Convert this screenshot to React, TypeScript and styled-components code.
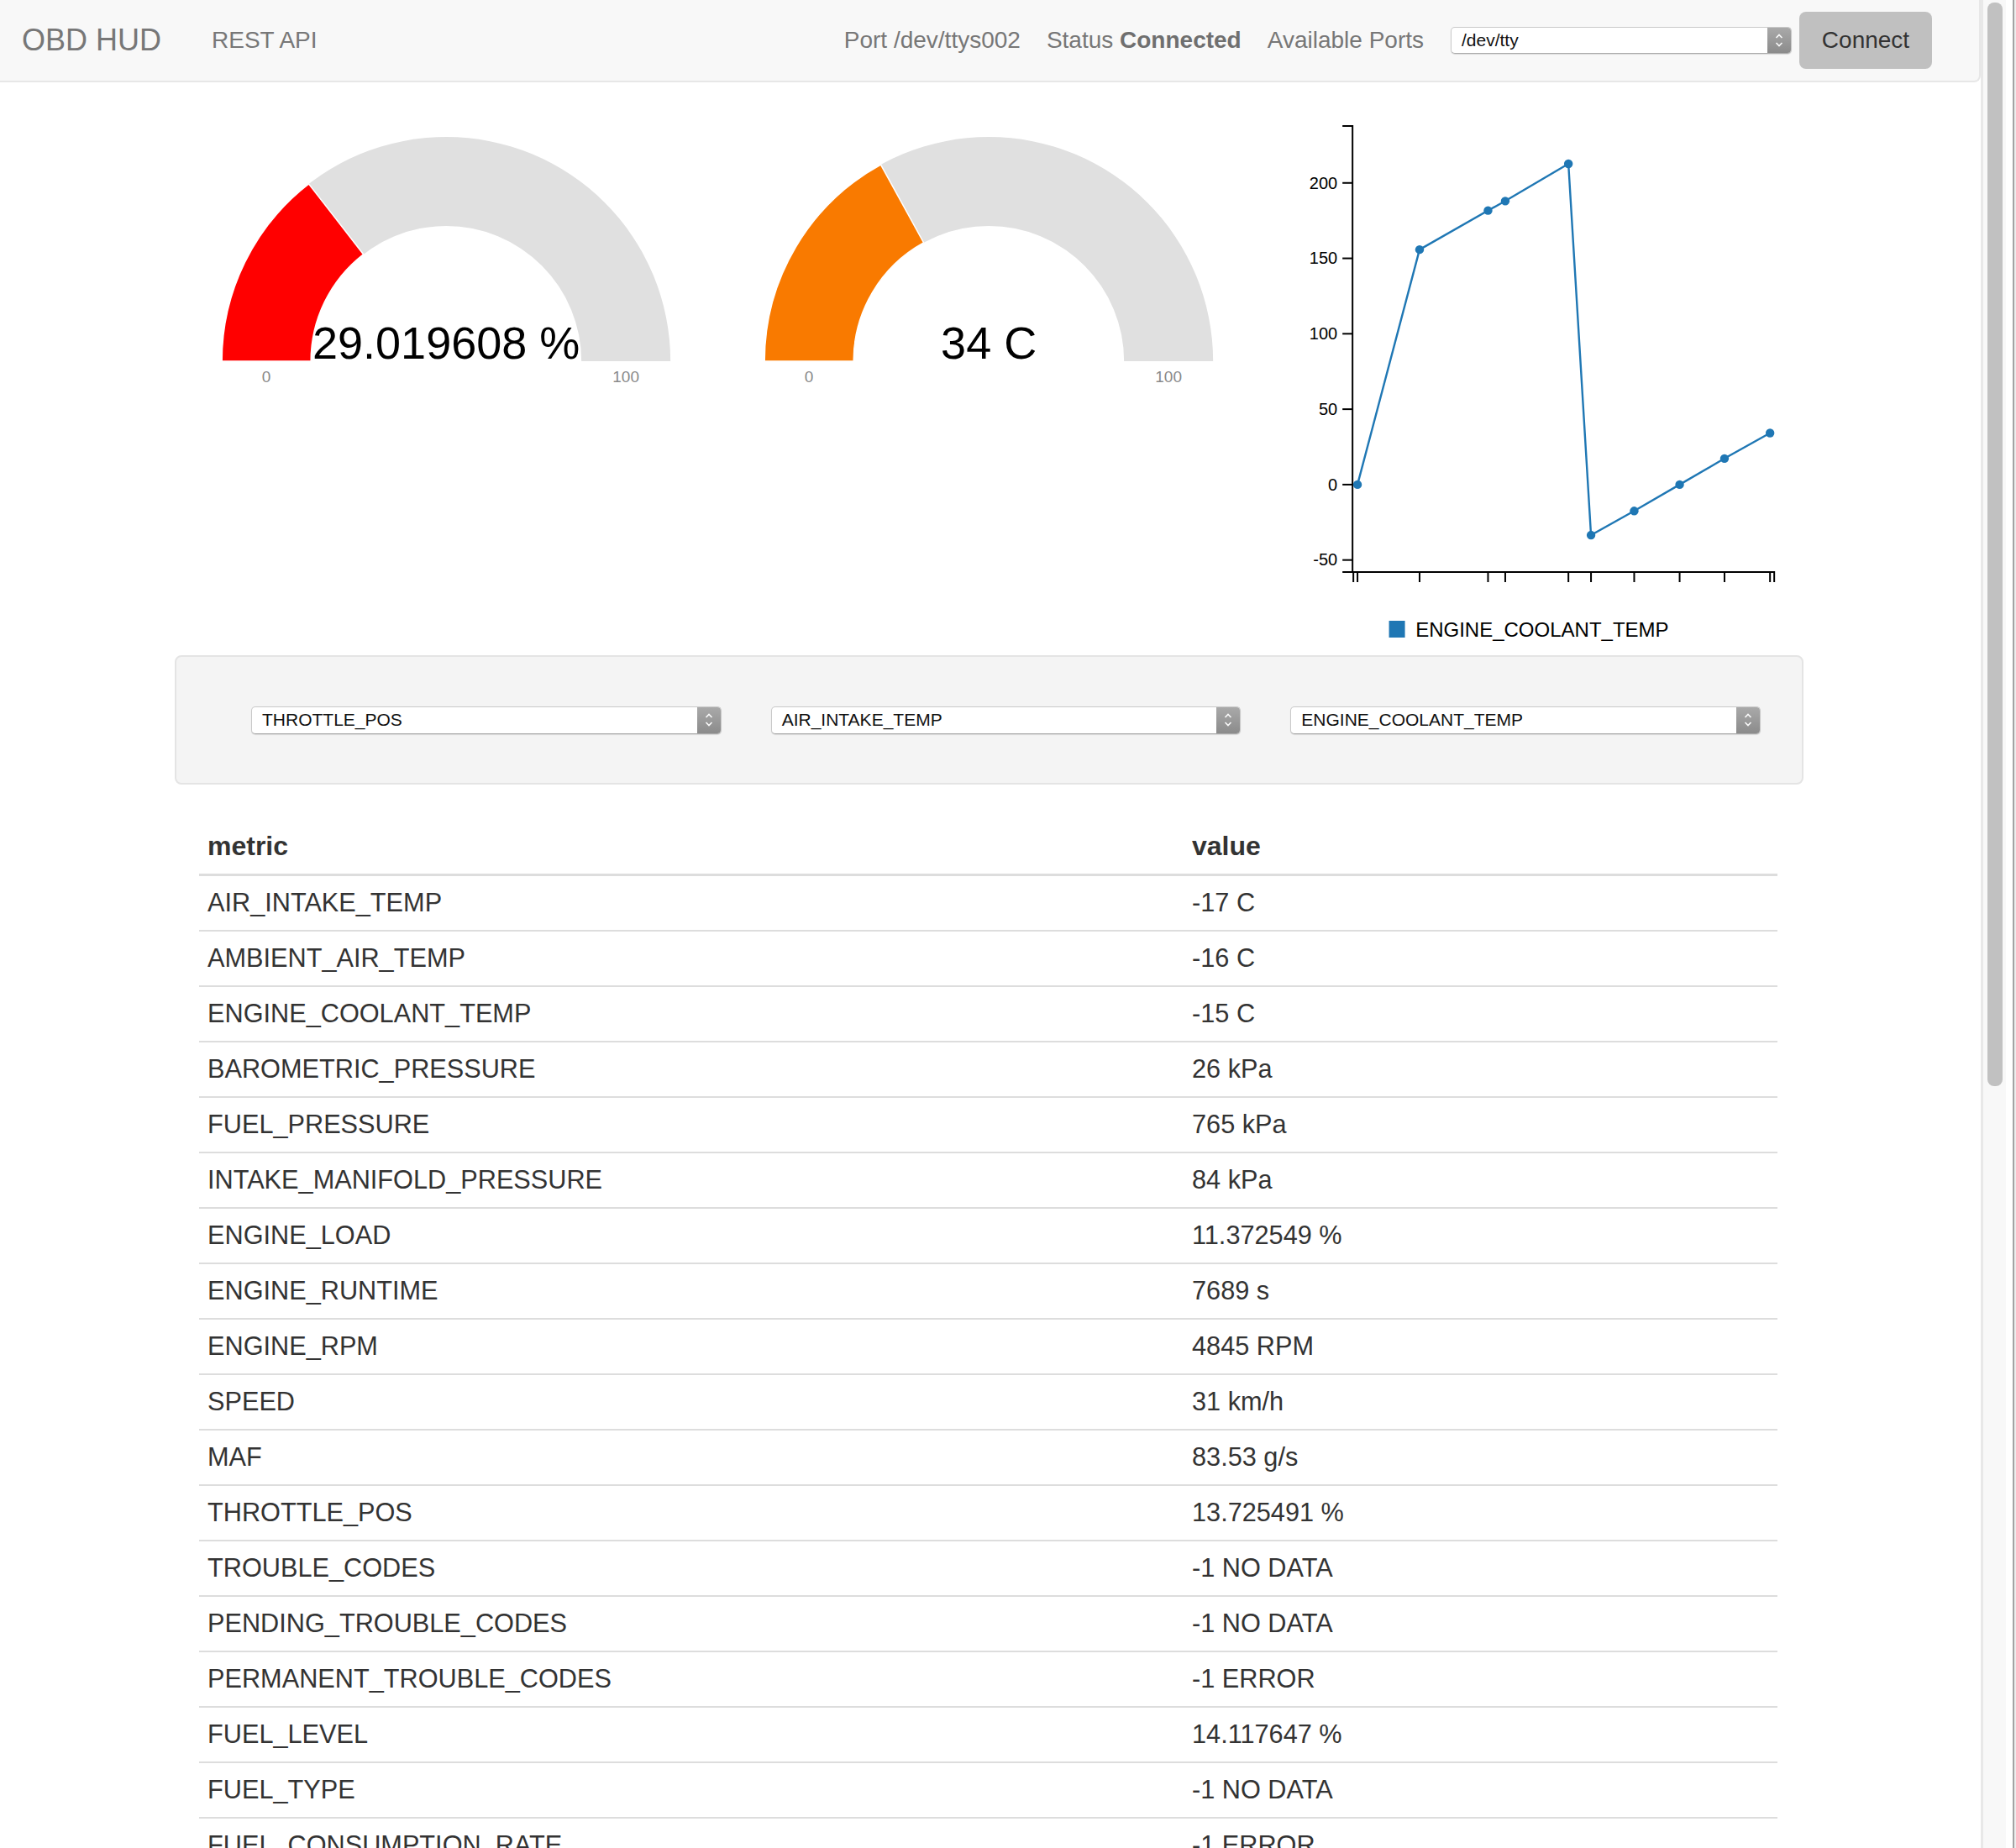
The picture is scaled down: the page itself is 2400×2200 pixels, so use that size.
import React from "react";
import styled, { createGlobalStyle } from "styled-components";

const GlobalStyle = createGlobalStyle`
  html, body { margin: 0; padding: 0; background: #fff; overflow: hidden; }
  body { font-family: "Liberation Sans", Arial, Helvetica, sans-serif; }
  * { box-sizing: border-box; }
`;

const Page = styled.div`
  display: flex;
  width: 2400px;
  height: 2200px;
  overflow: hidden;
  background: #fff;
`;

const Main = styled.div`
  flex: 1;
  min-width: 0;
  overflow: hidden;
`;

const ScrollTrack = styled.div`
  width: 30px;
  flex: none;
  background: #f8f8f8;
  border-left: 3px solid #e8e8e8;
  padding: 3px 4px 0 5px;
`;

const ScrollThumb = styled.div`
  height: 1290px;
  background: #c1c1c1;
  border-radius: 8px;
`;

const WindowEdge = styled.div`
  width: 12px;
  flex: none;
  background: linear-gradient(to right, #ffffff 0 8px, #a3a3a3 8px 10px, #ededed 10px);
`;

const Navbar = styled.nav`
  display: flex;
  align-items: center;
  height: 98px;
  background: #f8f8f8;
  border-bottom: 2px solid #e7e7e7;
  border-right: 2px solid #e7e7e7;
  border-bottom-right-radius: 8px;
  padding: 0 56px 0 26px;
  color: #777;
`;

const Brand = styled.span`
  font-size: 36px;
  color: #777;
  margin-right: 60px;
`;

const NavLink = styled.span`
  font-size: 28px;
  color: #777;
`;

const NavRight = styled.div`
  margin-left: auto;
  display: flex;
  align-items: center;
`;

const NavText = styled.span<{ $gap?: number }>`
  font-size: 28px;
  color: #777;
  margin-right: ${(p) => p.$gap ?? 31}px;
  white-space: nowrap;
  b { font-weight: bold; color: #6f6f6f; }
`;

const SelectBox = styled.div<{ $w?: number; $h?: number }>`
  display: flex;
  align-items: stretch;
  width: ${(p) => (p.$w ? `${p.$w}px` : "100%")};
  height: ${(p) => p.$h ?? 33}px;
  background: #fff;
  border: 1px solid #c9c9c9;
  border-bottom-color: #aaa;
  border-radius: 5px;
  box-shadow: 0 1px 1px rgba(0, 0, 0, 0.12);
  overflow: hidden;
`;

const SelectLabel = styled.span`
  flex: 1;
  display: flex;
  align-items: center;
  padding-left: 12px;
  font-size: 21px;
  color: #111;
  white-space: nowrap;
`;

const Stepper = styled.span`
  width: 28px;
  flex: none;
  display: flex;
  align-items: center;
  justify-content: center;
  background: linear-gradient(#a9a9a9, #8b8b8b);
`;

const ConnectButton = styled.button`
  margin-left: 9px;
  width: 158px;
  height: 68px;
  border: none;
  border-radius: 8px;
  background: #c0c0c0;
  color: #333;
  font-family: inherit;
  font-size: 28px;
  padding: 0;
`;

const Container = styled.div`
  width: 1939px;
  margin: 0 0 0 208px;
`;

const TopRow = styled.div`
  display: grid;
  grid-template-columns: repeat(3, 1fr);
  align-items: start;
  margin-top: 32px;
`;

const GaugeSvg = styled.svg`
  display: block;
  width: 100%;
  height: 340px;
  font-family: "Liberation Sans", Arial, sans-serif;
`;

const ChartSvg = styled.svg`
  display: block;
  width: 100%;
  height: 640px;
  font-family: "Liberation Sans", Arial, sans-serif;
`;

const Well = styled.div`
  margin-top: 10px;
  height: 154px;
  background: #f4f4f4;
  border: 2px solid #e4e4e4;
  border-radius: 8px;
  display: grid;
  grid-template-columns: repeat(3, 1fr);
  column-gap: 59px;
  align-items: center;
  padding: 0 49px 0 89px;
`;

const MetricTable = styled.table`
  width: calc(100% - 60px);
  margin: 40px 30px 0 29px;
  border-collapse: separate;
  border-spacing: 0;
  table-layout: fixed;
  font-size: 30.7px;
  color: #333;
`;

const HeadCell = styled.th<{ $w?: number }>`
  text-align: left;
  font-weight: bold;
  font-size: 32px;
  height: 69px;
  padding: 0 10px;
  border-bottom: 3px solid #ddd;
  ${(p) => (p.$w ? `width: ${p.$w}px;` : "")}
`;

const Cell = styled.td`
  padding: 0 10px;
  line-height: 64px;
  border-bottom: 2px solid #ddd;
  white-space: nowrap;
`;

const StepIcon = () => (
  <svg width="12" height="20" viewBox="0 0 12 20">
    <path d="M2.5 7 L6 3.5 L9.5 7" fill="none" stroke="#fafafa" strokeWidth="1.6" />
    <path d="M2.5 13 L6 16.5 L9.5 13" fill="none" stroke="#fafafa" strokeWidth="1.6" />
  </svg>
);

const Select = ({ label, w, h }: { label: string; w?: number; h?: number }) => (
  <SelectBox $w={w} $h={h}>
    <SelectLabel>{label}</SelectLabel>
    <Stepper>
      <StepIcon />
    </Stepper>
  </SelectBox>
);

function arcPath(cx: number, cy: number, R: number, r: number, f: number) {
  const a = Math.PI * (1 - f);
  const x1 = cx + R * Math.cos(a);
  const y1 = cy - R * Math.sin(a);
  const x2 = cx + r * Math.cos(a);
  const y2 = cy - r * Math.sin(a);
  return `M ${cx - R} ${cy} A ${R} ${R} 0 0 1 ${x1} ${y1} L ${x2} ${y2} A ${r} ${r} 0 0 0 ${cx - r} ${cy} Z`;
}

const Gauge = ({ value, color, text }: { value: number; color: string; text: string }) => {
  const cx = 323;
  const cy = 300;
  const R = 267;
  const r = 161;
  const mid = (R + r) / 2;
  return (
    <GaugeSvg viewBox="0 0 646 340">
      <path d={arcPath(cx, cy, R, r, 1)} fill="#e0e0e0" />
      <path d={arcPath(cx, cy, R, r, value / 100)} fill={color} stroke="#fff" strokeWidth="1.5" />
      <text x={cx} y={297} textAnchor="middle" fontSize="54" fill="#000">
        {text}
      </text>
      <text x={cx - mid} y={325} textAnchor="middle" fontSize="19" fill="#8a8a8a">
        0
      </text>
      <text x={cx + mid} y={325} textAnchor="middle" fontSize="19" fill="#8a8a8a">
        100
      </text>
    </GaugeSvg>
  );
};

const points: [number, number][] = [
  [114.9, 0],
  [188.8, 155.8],
  [270.3, 181.7],
  [290.8, 188],
  [366, 212.7],
  [392.9, -33.5],
  [444.3, -17.5],
  [498.4, 0],
  [551.8, 17.3],
  [606, 34.2],
];
const yS = (v: number) => 446.9 - v * 1.7956;

const Chart = () => {
  const line = points.map(([x, v], i) => `${i ? "L" : "M"}${x} ${yS(v)}`).join(" ");
  return (
    <ChartSvg viewBox="0 0 646 640">
      <path d="M97 20 H109 V551 H97" fill="none" stroke="#000" strokeWidth="2" />
      {[200, 150, 100, 50, 0, -50].map((t) => (
        <g key={t}>
          <line x1={97} x2={109} y1={yS(t)} y2={yS(t)} stroke="#000" strokeWidth="2" />
          <text x={91} y={yS(t)} dy="0.34em" textAnchor="end" fontSize="20" fill="#000">
            {t}
          </text>
        </g>
      ))}
      <path d="M110 563 V551 H611 V563" fill="none" stroke="#000" strokeWidth="2" />
      {points.map(([x]) => (
        <line key={x} x1={x} x2={x} y1={551} y2={563} stroke="#000" strokeWidth="2" />
      ))}
      <path d={line} fill="none" stroke="#1f77b4" strokeWidth="2.4" />
      {points.map(([x, v]) => (
        <circle key={x} cx={x} cy={yS(v)} r="5.2" fill="#1f77b4" />
      ))}
      <rect x={152.4} y={609} width={19} height={20} fill="#1f77b4" />
      <text x={184} y={627.5} fontSize="24" fill="#000">
        ENGINE_COOLANT_TEMP
      </text>
    </ChartSvg>
  );
};

const metrics: [string, string][] = [
  ["AIR_INTAKE_TEMP", "-17 C"],
  ["AMBIENT_AIR_TEMP", "-16 C"],
  ["ENGINE_COOLANT_TEMP", "-15 C"],
  ["BAROMETRIC_PRESSURE", "26 kPa"],
  ["FUEL_PRESSURE", "765 kPa"],
  ["INTAKE_MANIFOLD_PRESSURE", "84 kPa"],
  ["ENGINE_LOAD", "11.372549 %"],
  ["ENGINE_RUNTIME", "7689 s"],
  ["ENGINE_RPM", "4845 RPM"],
  ["SPEED", "31 km/h"],
  ["MAF", "83.53 g/s"],
  ["THROTTLE_POS", "13.725491 %"],
  ["TROUBLE_CODES", "-1 NO DATA"],
  ["PENDING_TROUBLE_CODES", "-1 NO DATA"],
  ["PERMANENT_TROUBLE_CODES", "-1 ERROR"],
  ["FUEL_LEVEL", "14.117647 %"],
  ["FUEL_TYPE", "-1 NO DATA"],
  ["FUEL_CONSUMPTION_RATE", "-1 ERROR"],
  ["OIL_TEMP", "-1 ERROR"],
];

export default function App() {
  return (
    <>
      <GlobalStyle />
      <Page>
        <Main>
          <Navbar>
            <Brand>OBD HUD</Brand>
            <NavLink>REST API</NavLink>
            <NavRight>
              <NavText>Port /dev/ttys002</NavText>
              <NavText>
                Status <b>Connected</b>
              </NavText>
              <NavText $gap={32}>Available Ports</NavText>
              <Select label="/dev/tty" w={406} h={32} />
              <ConnectButton>Connect</ConnectButton>
            </NavRight>
          </Navbar>
          <Container>
            <TopRow>
              <Gauge value={29.019608} color="#ff0000" text="29.019608 %" />
              <Gauge value={34} color="#f97a00" text="34 C" />
              <Chart />
            </TopRow>
            <Well>
              <Select label="THROTTLE_POS" />
              <Select label="AIR_INTAKE_TEMP" />
              <Select label="ENGINE_COOLANT_TEMP" />
            </Well>
            <MetricTable>
              <thead>
                <tr>
                  <HeadCell $w={1172}>metric</HeadCell>
                  <HeadCell>value</HeadCell>
                </tr>
              </thead>
              <tbody>
                {metrics.map(([k, v]) => (
                  <tr key={k}>
                    <Cell>{k}</Cell>
                    <Cell>{v}</Cell>
                  </tr>
                ))}
              </tbody>
            </MetricTable>
          </Container>
        </Main>
        <ScrollTrack>
          <ScrollThumb />
        </ScrollTrack>
        <WindowEdge />
      </Page>
    </>
  );
}
